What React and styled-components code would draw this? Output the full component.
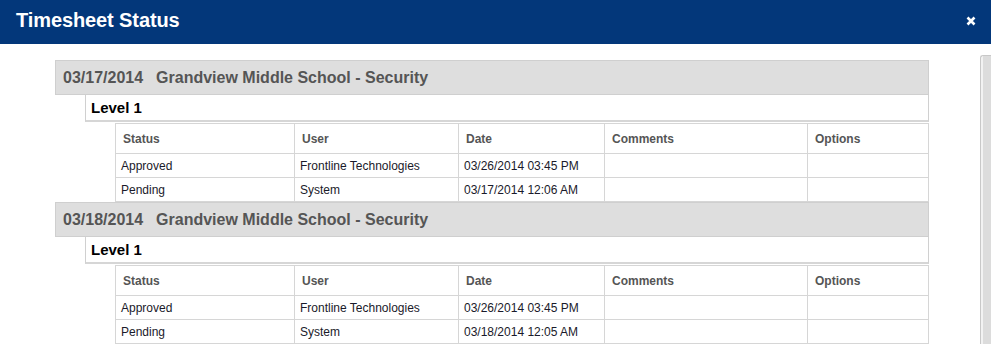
import React from "react";
import styled, { createGlobalStyle } from "styled-components";

const GlobalStyle = createGlobalStyle`
  html, body {
    margin: 0;
    padding: 0;
    background: #fff;
    font-family: "Liberation Sans", Arial, sans-serif;
    overflow: hidden;
  }
`;

const groups = [
  {
    date: "03/17/2014",
    title: "Grandview Middle School - Security",
    level: "Level 1",
    rows: [
      { status: "Approved", user: "Frontline Technologies", date: "03/26/2014 03:45 PM" },
      { status: "Pending", user: "System", date: "03/17/2014 12:06 AM" },
    ],
  },
  {
    date: "03/18/2014",
    title: "Grandview Middle School - Security",
    level: "Level 1",
    rows: [
      { status: "Approved", user: "Frontline Technologies", date: "03/26/2014 03:45 PM" },
      { status: "Pending", user: "System", date: "03/18/2014 12:05 AM" },
    ],
  },
];

const columns = [
  { label: "Status", width: 179 },
  { label: "User", width: 164 },
  { label: "Date", width: 146 },
  { label: "Comments", width: 203 },
  { label: "Options", width: 121 },
];

const CloseIcon = () => (
  <svg width="10" height="10" viewBox="0 0 10 10">
    <path d="M1.5 1.5 L8.5 8.5 M8.5 1.5 L1.5 8.5" stroke="#fff" strokeWidth="2.6" strokeLinecap="butt" />
  </svg>
);

const App = () => {
  return (
    <>
      <GlobalStyle />
      <Modal>
        <TitleBar>
          <Title>Timesheet Status</Title>
          <CloseButton>
            <CloseIcon />
          </CloseButton>
        </TitleBar>
        <Body>
          <Content>
            {groups.map((group, index) => (
              <Group key={index}>
                <GroupHeader>
                  <GroupDate>{group.date}</GroupDate>
                  <span>{group.title}</span>
                </GroupHeader>
                <LevelBox>{group.level}</LevelBox>
                <StatusTable>
                  <colgroup>
                    {columns.map((col) => (
                      <col key={col.label} style={{ width: col.width }} />
                    ))}
                  </colgroup>
                  <thead>
                    <tr>
                      {columns.map((col) => (
                        <HeadCell key={col.label}>{col.label}</HeadCell>
                      ))}
                    </tr>
                  </thead>
                  <tbody>
                    {group.rows.map((row, i) => (
                      <tr key={i}>
                        <Cell>{row.status}</Cell>
                        <Cell>{row.user}</Cell>
                        <Cell>{row.date}</Cell>
                        <Cell></Cell>
                        <Cell></Cell>
                      </tr>
                    ))}
                  </tbody>
                </StatusTable>
              </Group>
            ))}
          </Content>
          <Scrollbar />
        </Body>
      </Modal>
    </>
  );
};

export default App;

const Modal = styled.div`
  width: 991px;
  height: 344px;
  overflow: hidden;
  background: #fff;
`;

const TitleBar = styled.div`
  height: 44px;
  background-color: #03377a;
  display: flex;
  align-items: flex-start;
  justify-content: space-between;
  padding: 0 15px 0 16px;
  box-sizing: border-box;
`;

const Title = styled.h1`
  margin: 0;
  padding-top: 10px;
  font-size: 20px;
  line-height: 20px;
  font-weight: bold;
  color: #fff;
  letter-spacing: -0.1px;
`;

const CloseButton = styled.div`
  padding-top: 16px;
  display: flex;
`;

const Body = styled.div`
  display: flex;
  align-items: flex-start;
`;

const Content = styled.div`
  width: 874px;
  margin-left: 55px;
  padding-top: 16px;
  display: flex;
  flex-direction: column;
`;

const Group = styled.div`
  display: flex;
  flex-direction: column;
`;

const GroupHeader = styled.div`
  height: 35px;
  box-sizing: border-box;
  background-color: #dedede;
  border: 1px solid #cfcfcf;
  padding: 0 0 0 7px;
  display: flex;
  align-items: center;
  font-size: 16px;
  font-weight: bold;
  color: #555;
`;

const GroupDate = styled.span`
  margin-right: 13px;
`;

const LevelBox = styled.div`
  margin-left: 30px;
  height: 27px;
  box-sizing: border-box;
  border: 1px solid #d0d0d0;
  border-top: none;
  border-bottom: 2px solid #d6d6d6;
  padding: 0 0 0 5px;
  display: flex;
  align-items: center;
  font-size: 15px;
  font-weight: bold;
  color: #000;
`;

const StatusTable = styled.table`
  margin: 1px 0 0 60px;
  width: 813px;
  border-collapse: collapse;
  table-layout: fixed;
`;

const HeadCell = styled.th`
  height: 30px;
  padding: 0 0 0 7px;
  border: 1px solid #d6d6d6;
  text-align: left;
  font-size: 12px;
  font-weight: bold;
  color: #555;
  box-sizing: border-box;
`;

const Cell = styled.td`
  height: 24px;
  padding: 0 0 0 5px;
  border: 1px solid #d6d6d6;
  font-size: 12px;
  color: #1a1a2a;
  box-sizing: border-box;
  white-space: nowrap;
`;

const Scrollbar = styled.div`
  margin: 11px 0 0 auto;
  width: 11px;
  height: 300px;
  box-sizing: border-box;
  border: 1px solid #c8c8c8;
  border-right: none;
  border-radius: 3px 0 0 0;
  background: linear-gradient(to right, #f2f2f2 0 2px, #dcdcdc 2px);
`;
